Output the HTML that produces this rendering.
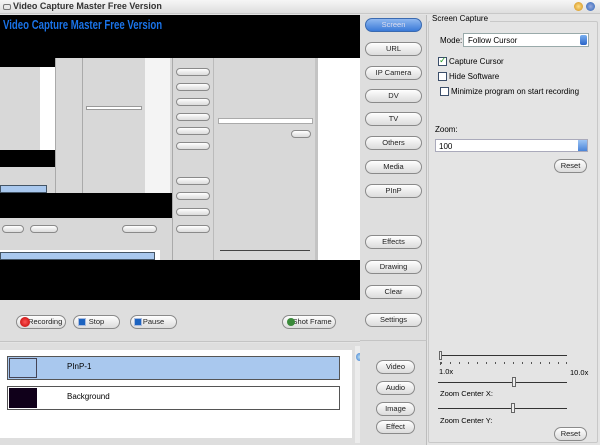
<!DOCTYPE html>
<html><head><meta charset="utf-8"><style>
*{box-sizing:border-box;margin:0;padding:0}
body{width:600px;height:445px;overflow:hidden;background:#e4e4e4;font-family:"Liberation Sans",sans-serif;font-size:8px;color:#000;position:relative}
.a{position:absolute}
.btn{position:absolute;height:14px;border:1px solid #8a8a8a;border-radius:8px;background:linear-gradient(#ffffff,#ececec 50%,#dcdcdc);text-align:center;line-height:12px;font-size:7.5px;color:#222}
.blk{position:absolute;background:#000}
.chk{position:absolute;width:9px;height:9px;border:1px solid #3b4e6a;background:#fff}
</style></head><body>
<div class="a" style="left:0;top:0;width:600px;height:14px;background:linear-gradient(#f6f6f6,#dedede);border-bottom:1px solid #c8c8c8"></div>
<div class="a" style="left:3px;top:4px;width:8px;height:6px;border:1px solid #777;border-radius:2px"></div>
<div class="a" style="left:13px;top:1px;font-size:9px;font-weight:bold;color:#333">Video Capture Master Free Version</div>
<div class="a" style="left:574px;top:2px;width:9px;height:9px;border-radius:50%;background:radial-gradient(#ffe08a,#d08a10)"></div>
<div class="a" style="left:586px;top:2px;width:9px;height:9px;border-radius:50%;background:radial-gradient(#9ad,#2a64b8)"></div>

<div class="a" style="left:0;top:15px;width:360px;height:285px;background:#d8d8d8"></div>
<div class="blk" style="left:0;top:15px;width:360px;height:43px"></div>
<div class="a" style="left:3px;top:17px;font-size:13px;color:#1a73e8;font-weight:bold;transform:scaleX(0.74);transform-origin:0 0;white-space:nowrap">Video Capture Master Free Version</div>
<div class="blk" style="left:0;top:58px;width:55px;height:9px"></div>
<div class="a" style="left:40px;top:67px;width:15px;height:83px;background:#fff"></div>
<div class="blk" style="left:0;top:150px;width:55px;height:17px"></div>
<div class="a" style="left:0;top:185px;width:47px;height:8px;background:#a9c8ee;border:1px solid #456"></div>
<div class="a" style="left:55px;top:58px;width:1px;height:135px;background:#aaa"></div>
<div class="a" style="left:82px;top:58px;width:1px;height:135px;background:#aaa"></div>
<div class="a" style="left:145px;top:58px;width:25px;height:135px;background:#f4f4f4"></div>
<div class="a" style="left:86px;top:106px;width:56px;height:4px;background:#fff;border:1px solid #999"></div>
<div class="blk" style="left:0;top:193px;width:172px;height:25px"></div>
<div class="btn" style="left:2px;top:225px;width:22px;height:8px;border-radius:5px"></div>
<div class="btn" style="left:30px;top:225px;width:28px;height:8px;border-radius:5px"></div>
<div class="btn" style="left:122px;top:225px;width:35px;height:8px;border-radius:5px"></div>
<div class="a" style="left:0;top:250px;width:160px;height:10px;background:#fff"></div>
<div class="a" style="left:0;top:252px;width:155px;height:8px;background:#a9c8ee;border:1px solid #456"></div>
<div class="a" style="left:172px;top:58px;width:1px;height:202px;background:#aaa"></div>
<div class="a" style="left:213px;top:58px;width:1px;height:202px;background:#bbb"></div>
<div class="a" style="left:318px;top:58px;width:42px;height:202px;background:#fff"></div>
<div class="a" style="left:315px;top:58px;width:3px;height:202px;background:#c4c4c4"></div>
<div class="btn" style="left:176px;top:68px;width:34px;height:8px;border-radius:5px"></div>
<div class="btn" style="left:176px;top:83px;width:34px;height:8px;border-radius:5px"></div>
<div class="btn" style="left:176px;top:98px;width:34px;height:8px;border-radius:5px"></div>
<div class="btn" style="left:176px;top:113px;width:34px;height:8px;border-radius:5px"></div>
<div class="btn" style="left:176px;top:127px;width:34px;height:8px;border-radius:5px"></div>
<div class="btn" style="left:176px;top:142px;width:34px;height:8px;border-radius:5px"></div>
<div class="btn" style="left:176px;top:177px;width:34px;height:8px;border-radius:5px"></div>
<div class="btn" style="left:176px;top:192px;width:34px;height:8px;border-radius:5px"></div>
<div class="btn" style="left:176px;top:208px;width:34px;height:8px;border-radius:5px"></div>
<div class="btn" style="left:176px;top:225px;width:34px;height:8px;border-radius:5px"></div>
<div class="a" style="left:218px;top:118px;width:95px;height:6px;background:#fff;border:1px solid #aaa"></div>
<div class="btn" style="left:291px;top:130px;width:20px;height:8px;border-radius:5px"></div>
<div class="a" style="left:220px;top:250px;width:90px;height:1px;background:#444"></div>
<div class="blk" style="left:0;top:260px;width:360px;height:40px"></div>

<div class="a" style="left:0;top:300px;width:360px;height:42px;background:#dedede;border-bottom:1px solid #c4c4c4"></div>
<div class="btn" style="left:16px;top:315px;width:50px">&nbsp;&nbsp;&nbsp;&nbsp;Recording</div>
<div class="a" style="left:20px;top:317px;width:10px;height:10px;border-radius:50%;background:radial-gradient(#f55,#b00)"></div>
<div class="btn" style="left:73px;top:315px;width:47px">Stop</div>
<div class="a" style="left:78px;top:318px;width:8px;height:8px;background:#1c63c0;border:1px solid #abd"></div>
<div class="btn" style="left:130px;top:315px;width:47px">Pause</div>
<div class="a" style="left:134px;top:318px;width:8px;height:8px;background:#1c63c0;border:1px solid #abd"></div>
<div class="btn" style="left:282px;top:315px;width:54px">&nbsp;&nbsp;&nbsp;Shot Frame</div>
<div class="a" style="left:287px;top:318px;width:8px;height:8px;border-radius:50%;background:#3a8a3a"></div>

<div class="a" style="left:0;top:343px;width:363px;height:102px;background:#dedede"></div>
<div class="a" style="left:0;top:350px;width:352px;height:88px;background:#fff"></div>
<div class="a" style="left:7px;top:356px;width:333px;height:24px;background:#a9c8ee;border:1px solid #555"></div>
<div class="a" style="left:9px;top:358px;width:28px;height:20px;background:#a9c8ee;border:1px solid #445"></div>
<div class="a" style="left:67px;top:362px;font-size:8px">PInP-1</div>
<div class="a" style="left:7px;top:386px;width:333px;height:24px;background:#fff;border:1px solid #555"></div>
<div class="a" style="left:9px;top:388px;width:28px;height:20px;background:#10001a"></div>
<div class="a" style="left:67px;top:392px;font-size:8px">Background</div>
<div class="a" style="left:355px;top:346px;width:8px;height:97px;background:#ececec"></div>
<div class="a" style="left:356px;top:353px;width:7px;height:8px;border-radius:50%;background:radial-gradient(#bde,#3a7bd5)"></div>

<div class="a" style="left:360px;top:15px;width:67px;height:325px;background:#dedede;border-right:1px solid #bdbdbd"></div>
<div class="a" style="left:360px;top:340px;width:67px;height:105px;background:#dedede;border-top:1px solid #c4c4c4;border-right:1px solid #bdbdbd"></div>
<div class="btn" style="left:365px;top:18px;width:57px;background:linear-gradient(#8fb8f0,#3a7ad8);border-color:#3a6ab0;color:#dde">Screen</div>
<div class="btn" style="left:365px;top:42px;width:57px">URL</div>
<div class="btn" style="left:365px;top:66px;width:57px">IP Camera</div>
<div class="btn" style="left:365px;top:89px;width:57px">DV</div>
<div class="btn" style="left:365px;top:112px;width:57px">TV</div>
<div class="btn" style="left:365px;top:136px;width:57px">Others</div>
<div class="btn" style="left:365px;top:160px;width:57px">Media</div>
<div class="btn" style="left:365px;top:184px;width:57px">PInP</div>
<div class="btn" style="left:365px;top:235px;width:57px">Effects</div>
<div class="btn" style="left:365px;top:260px;width:57px">Drawing</div>
<div class="btn" style="left:365px;top:285px;width:57px">Clear</div>
<div class="btn" style="left:365px;top:313px;width:57px">Settings</div>
<div class="btn" style="left:376px;top:360px;width:39px">Video</div>
<div class="btn" style="left:376px;top:381px;width:39px">Audio</div>
<div class="btn" style="left:376px;top:402px;width:39px">Image</div>
<div class="btn" style="left:376px;top:420px;width:39px">Effect</div>

<div class="a" style="left:428px;top:15px;width:172px;height:430px;background:#e4e4e4"></div>
<div class="a" style="left:428px;top:21px;width:170px;height:422px;border:1px solid #c8c8c8;border-radius:2px"></div>
<div class="a" style="left:430px;top:14px;padding:0 2px;background:#e4e4e4;font-size:8px">Screen Capture</div>
<div class="a" style="left:440px;top:36px;font-size:8px">Mode:</div>
<div class="a" style="left:463px;top:33px;width:126px;height:14px;background:#fff;border:1px solid #9aa;font-size:8px;padding:2px 4px">Follow Cursor</div>
<div class="a" style="left:580px;top:35px;width:7px;height:10px;background:linear-gradient(#7ab0f0,#2a64c8);border-radius:2px"></div>
<div class="chk" style="left:438px;top:57px"></div>
<div class="a" style="left:439px;top:55px;font-size:9px;color:#2a9a2a">✓</div>
<div class="a" style="left:449px;top:57px;font-size:8px">Capture Cursor</div>
<div class="chk" style="left:438px;top:72px"></div>
<div class="a" style="left:449px;top:72px;font-size:8px">Hide Software</div>
<div class="chk" style="left:440px;top:87px"></div>
<div class="a" style="left:451px;top:87px;font-size:8px">Minimize program on start recording</div>
<div class="a" style="left:435px;top:125px;font-size:8px">Zoom:</div>
<div class="a" style="left:435px;top:139px;width:153px;height:13px;background:#fff;border:1px solid #aab;font-size:8px;padding:2px 3px">100</div>
<div class="a" style="left:578px;top:140px;width:9px;height:11px;background:linear-gradient(#9cc4f4,#4a84d8)"></div>
<div class="btn" style="left:554px;top:159px;width:33px">Reset</div>
<div class="a" style="left:440px;top:355px;width:127px;height:1px;background:#333"></div>
<div class="a" style="left:439px;top:351px;width:3px;height:9px;background:#eee;border:1px solid #666"></div>
<div class="a" style="left:440px;top:362px;width:127px;height:2px;border-left:1px dotted #555;border-right:1px solid #555;background:repeating-linear-gradient(90deg,#555 0 1px,transparent 1px 9px)"></div>
<div class="a" style="left:439px;top:367px;font-size:7.5px">1.0x</div>
<div class="a" style="left:570px;top:368px;font-size:7.5px">10.0x</div>
<div class="a" style="left:438px;top:382px;width:129px;height:1px;background:#333"></div>
<div class="a" style="left:512px;top:377px;width:4px;height:10px;background:#eee;border:1px solid #666"></div>
<div class="a" style="left:440px;top:389px;font-size:7.5px">Zoom Center X:</div>
<div class="a" style="left:438px;top:408px;width:129px;height:1px;background:#333"></div>
<div class="a" style="left:511px;top:403px;width:4px;height:10px;background:#eee;border:1px solid #666"></div>
<div class="a" style="left:440px;top:416px;font-size:7.5px">Zoom Center Y:</div>
<div class="btn" style="left:554px;top:427px;width:33px">Reset</div>
</body></html>
